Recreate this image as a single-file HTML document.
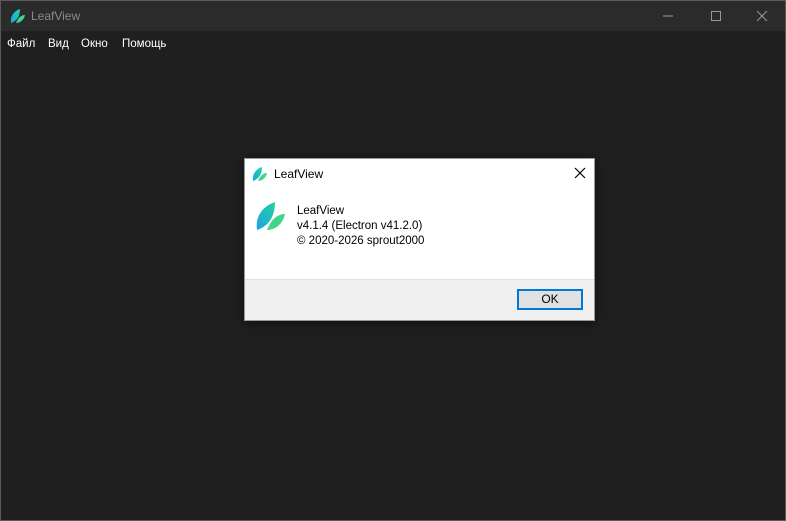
<!DOCTYPE html>
<html><head><meta charset="utf-8"><style>
*{margin:0;padding:0;box-sizing:border-box}
body{width:786px;height:521px;overflow:hidden;background:#1f1f1f;font-family:"Segoe UI","Liberation Sans",sans-serif;position:relative}
.win{position:absolute;left:0;top:0;width:786px;height:521px;border:1px solid #5a5a5a;background:#1f1f1f}
.title{position:absolute;left:0;top:0;width:784px;height:30px;background:#2b2b2b}
.title .t{position:absolute;left:30px;top:8px;font-size:12px;color:#8a8a8a}
.menu{position:absolute;left:0;top:30px;height:26px;width:784px;background:#1f1f1f;color:#fff;font-size:11.5px}
.menu span{position:absolute;top:7px}
.ctl{position:absolute;top:0;width:46px;height:30px}
.dlg{position:absolute;left:244px;top:158px;width:351px;height:163px;background:#fff;border:1px solid #999;box-shadow:0 2px 10px rgba(0,0,0,.5)}
.dlg .tt{position:absolute;left:29px;top:8px;font-size:12px;color:#000}
.foot{position:absolute;left:0;top:120px;width:349px;height:41px;background:#f0f0f0;border-top:1px solid #dfdfdf}
.ok{position:absolute;left:272px;top:9px;width:66px;height:21px;background:#e1e1e1;border:2px solid #0078d7;font-size:12px;text-align:center;line-height:17px;color:#000}
.info{position:absolute;left:52px;top:45px;font-size:11.5px;line-height:15px;color:#000}
</style></head><body>
<div class="win">
<div class="title">
<svg style="position:absolute;left:9px;top:7px" width="16" height="16" viewBox="0 0 16 16"><defs><linearGradient id="g1" x1="0" y1="1" x2="1" y2="0"><stop offset="0" stop-color="#1fa2e0"/><stop offset="1" stop-color="#22d3a0"/></linearGradient></defs><path d="M1 15 C0 8 4 3 10 1 C10 8 7 13 1 15Z" fill="url(#g1)"/><path d="M6 15 C8 10 11 7 15 7 C14 12 10 15 6 15Z" fill="#3fd68a"/></svg>
<span class="t">LeafView</span>
<svg class="ctl" style="left:644px" viewBox="0 0 46 30"><line x1="18" y1="15" x2="28" y2="15" stroke="#999" stroke-width="1"/></svg>
<svg class="ctl" style="left:692px" viewBox="0 0 46 30"><rect x="18.5" y="10.5" width="9" height="9" fill="none" stroke="#999"/></svg>
<svg class="ctl" style="left:738px" viewBox="0 0 46 30"><path d="M18 10 L28 20 M28 10 L18 20" stroke="#999"/></svg>
</div>
<div class="menu"><span style="left:6px">Файл</span><span style="left:47px">Вид</span><span style="left:80px">Окно</span><span style="left:121px">Помощь</span></div>
</div>
<div class="dlg">
<svg style="position:absolute;left:7px;top:7px" width="16" height="16" viewBox="0 0 16 16"><path d="M1 15 C0 8 4 3 10 1 C10 8 7 13 1 15Z" fill="url(#g1)"/><path d="M6 15 C8 10 11 7 15 7 C14 12 10 15 6 15Z" fill="#3fd68a"/></svg>
<span class="tt">LeafView</span>
<svg style="position:absolute;left:329px;top:8px" width="12" height="12" viewBox="0 0 12 12"><path d="M1 1 L11 11 M11 1 L1 11" stroke="#000" stroke-width="1.2"/></svg>
<svg style="position:absolute;left:10px;top:41px" width="32" height="32" viewBox="0 0 16 16"><path d="M1 15 C0 8 4 3 10 1 C10 8 7 13 1 15Z" fill="url(#g1)"/><path d="M6 15 C8 10 11 7 15 7 C14 12 10 15 6 15Z" fill="#3fd68a"/></svg>
<div class="info">LeafView<br>v4.1.4 (Electron v41.2.0)<br>© 2020-2026 sprout2000</div>
<div class="foot"><div class="ok">OK</div></div>
</div>
</body></html>
